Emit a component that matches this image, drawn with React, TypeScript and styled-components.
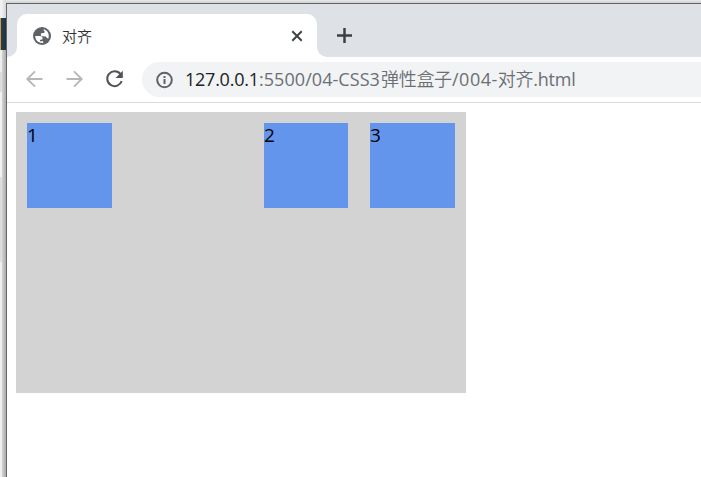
import React from "react";
import styled, { createGlobalStyle } from "styled-components";

const GlobalStyle = createGlobalStyle`
  html, body, #root { margin: 0; height: 100%; }
  body {
    overflow: hidden;
    background: #fff;
    font-family: "Open Sans", "Noto Sans CJK SC", sans-serif;
  }
`;

const Desktop = styled.div`
  display: flex;
  width: 701px;
  height: 477px;
  overflow: hidden;
  background: #ededed;
`;

const Backdrop = styled.div`
  display: flex;
  flex: 0 0 6px;
  position: relative;
`;

const BackdropColumn = styled.div`
  flex: 0 0 2px;
  display: flex;
  flex-direction: column;
`;

const Strip = styled.div<{ $h: number; $bg: string }>`
  flex: 0 0 ${(p) => p.$h}px;
  background: ${(p) => p.$bg};
`;

const BackdropShade = styled.div`
  flex: 1;
  display: flex;
  flex-direction: column;
`;

const EdgeShadow = styled.div`
  position: absolute;
  inset: 50px 0 0 0;
  background: linear-gradient(90deg, transparent 0 2px, rgba(0, 0, 0, 0.08) 2px, rgba(0, 0, 0, 0.26) 6px);
`;

const Main = styled.div`
  flex: 1;
  min-width: 0;
  display: flex;
  flex-direction: column;
  background: linear-gradient(#e9e9e9, #cfcfcf 3px);
  padding-top: 3px;
`;

const Window = styled.div`
  flex: 1;
  display: flex;
  flex-direction: column;
  background: #fff;
  border-top: 1px solid #5f6266;
  border-left: 1px solid #63666a;
`;

const TabStrip = styled.div`
  display: flex;
  flex: 0 0 53px;
  background: #fff;
`;

const StripStart = styled.div`
  flex: 0 0 10px;
  background: #dee1e6;
  border-bottom-right-radius: 10px;
`;

const TabSlot = styled.div`
  flex: 0 0 300px;
  padding-top: 10px;
  box-sizing: border-box;
  background: linear-gradient(#dee1e6 30px, #fff 30px);
`;

const Tab = styled.div`
  display: flex;
  align-items: center;
  height: 43px;
  box-sizing: border-box;
  padding: 0 12px 0 15px;
  border-radius: 10px 10px 0 0;
  background: #fff;
`;

const TabTitle = styled.span`
  flex: 1;
  margin-left: 10px;
  font: 350 15px/20px "Noto Sans CJK SC", sans-serif;
  color: #303236;
`;

const StripEnd = styled.div`
  flex: 1;
  display: flex;
  padding: 23px 0 0 19px;
  background: #dee1e6;
  border-bottom-left-radius: 10px;
`;

const Toolbar = styled.div`
  display: flex;
  align-items: center;
  flex: 0 0 46px;
  box-sizing: border-box;
  padding: 0 0 1px 16px;
  border-bottom: 1px solid #d9dadc;
`;

const NavIcon = styled.svg`
  flex: 0 0 22px;
  width: 22px;
  height: 22px;
  margin-right: 18px;
`;

const AddressBar = styled.div`
  display: flex;
  align-items: center;
  align-self: flex-start;
  margin-top: 5px;
  margin-left: -1px;
  flex: 1;
  height: 35px;
  padding-left: 12px;
  border-radius: 18px 0 0 18px;
  background: #f1f3f4;
`;

const Url = styled.span`
  display: flex;
  margin: 0 0 2px 10px;
  font-size: 18px;
  line-height: 24px;
  white-space: nowrap;
  color: #6b6f74;
`;

const UrlPart = styled.span<{ $width: number; $spacing?: number; $host?: boolean; $cjk?: boolean }>`
  flex: 0 0 ${(p) => p.$width}px;
  letter-spacing: ${(p) => p.$spacing ?? 0}px;
  color: ${(p) => (p.$host ? "#202124" : "inherit")};
  font-weight: ${(p) => (p.$cjk ? 350 : 400)};
`;

const Page = styled.main`
  flex: 1;
  padding: 9px;
`;

const FlexBox = styled.div`
  display: flex;
  box-sizing: border-box;
  width: 450px;
  height: 281px;
  padding: 11px;
  background: #d3d3d3;
`;

const Item = styled.div<{ $width: number; $before?: string }>`
  width: ${(p) => p.$width}px;
  height: 85px;
  margin-left: ${(p) => p.$before ?? "0"};
  background: #6495ed;
  font-size: 19px;
  line-height: 24px;
  color: #000;
`;

const Globe = () => (
  <svg width="20" height="20" viewBox="0 0 20 20">
    <circle cx="10" cy="10" r="9" fill="#5f6368" />
    <path
      fill="#fff"
      d="M11.6 3.2c3 .7 5.2 3.4 5.2 6.6 0 .9-.2 1.8-.5 2.6-.8.1-1.4-.2-1.8-.8l-.7-1.1-3.1-.2c-1.3-.1-1.9-.8-1.9-1.8S9.600 7 10.600 7h.7c.9 0 1.300-.6 1.300-1.300 0-.5-.3-.9-.8-1.200zM3.200 10h4.600c1.700 0 2.800.9 2.800 2.300 0 .9-.6 1.500-1.500 1.500H8v1.500h2.500c.8 0 1 .7.6 1.400-.4.2-.8.200-1.200.200-3.700 0-6.700-3-6.700-6.900z"
    />
  </svg>
);

const items = [
  { label: "1", width: 85 },
  { label: "2", width: 84, before: "auto" },
  { label: "3", width: 85, before: "22px" },
];

export default function App() {
  return (
    <>
      <GlobalStyle />
      <Desktop>
        <Backdrop>
          <BackdropColumn>
            <Strip $h={18} $bg="#f1f1f1" />
            <Strip $h={32} $bg="linear-gradient(90deg, #d39a46 1px, #263d53 1px)" />
            <Strip $h={22} $bg="#eeeeee" />
            <Strip $h={20} $bg="#dddddd" />
            <Strip $h={85} $bg="#f2f2f2" />
            <Strip $h={85} $bg="#dddddd" />
            <Strip $h={215} $bg="#f0f0f0" />
          </BackdropColumn>
          <BackdropShade>
            <Strip $h={18} $bg="linear-gradient(90deg, #eeeeee, #d5d5d5)" />
            <Strip $h={32} $bg="linear-gradient(90deg, #273d52, #20303f)" />
            <Strip $h={427} $bg="#e6e6e6" />
          </BackdropShade>
          <EdgeShadow />
        </Backdrop>
        <Main>
          <Window>
            <TabStrip>
              <StripStart />
              <TabSlot>
                <Tab>
                  <Globe />
                  <TabTitle>对齐</TabTitle>
                  <svg width="16" height="16" viewBox="0 0 16 16" stroke="#3c4043" strokeWidth="2" fill="none">
                    <path d="m3.3 3.3 9.4 9.4m0-9.4-9.4 9.4" />
                  </svg>
                </Tab>
              </TabSlot>
              <StripEnd>
                <svg width="17" height="17" viewBox="0 0 17 17" stroke="#3c4043" strokeWidth="2.5" fill="none">
                  <path d="M8.5 1v15M1 8.5h15" />
                </svg>
              </StripEnd>
            </TabStrip>
            <Toolbar>
              <NavIcon viewBox="0 0 22 22" fill="none" stroke="#b5b7b9" strokeWidth="1.9">
                <path d="M19.5 11h-15m7.5-7.7L4.3 11l7.7 7.7" />
              </NavIcon>
              <NavIcon viewBox="0 0 22 22" fill="none" stroke="#b5b7b9" strokeWidth="1.9">
                <path d="M3.5 11h15M11 3.3l7.7 7.7-7.7 7.7" />
              </NavIcon>
              <NavIcon viewBox="0 0 22 22">
                <path d="M17.5 6.2A7.4 7.4 0 1 0 18.7 13" fill="none" stroke="#505458" strokeWidth="2" />
                <path d="M19.8 2.8v7.3h-7.3z" fill="#505458" />
              </NavIcon>
              <AddressBar>
                <svg width="21" height="20" viewBox="0 0 21 20" fill="none" stroke="#5f6368" strokeWidth="2">
                  <circle cx="10.5" cy="10" r="7.3" />
                  <path d="M10.5 9v5M10.5 6v2" />
                </svg>
                <Url>
                  <UrlPart $width={74} $spacing={-0.25} $host>127.0.0.1</UrlPart>
                  <UrlPart $width={122} $spacing={0.05}>:5500/04-CSS3</UrlPart>
                  <UrlPart $width={71} $spacing={-0.3} $cjk>弹性盒子</UrlPart>
                  <UrlPart $width={45} $spacing={0.5}>/004-</UrlPart>
                  <UrlPart $width={35} $spacing={-0.3} $cjk>对齐</UrlPart>
                  <UrlPart $width={42} $spacing={-0.2}>.html</UrlPart>
                </Url>
              </AddressBar>
            </Toolbar>
            <Page>
              <FlexBox>
                {items.map((item) => (
                  <Item key={item.label} $width={item.width} $before={item.before}>
                    {item.label}
                  </Item>
                ))}
              </FlexBox>
            </Page>
          </Window>
        </Main>
      </Desktop>
    </>
  );
}
